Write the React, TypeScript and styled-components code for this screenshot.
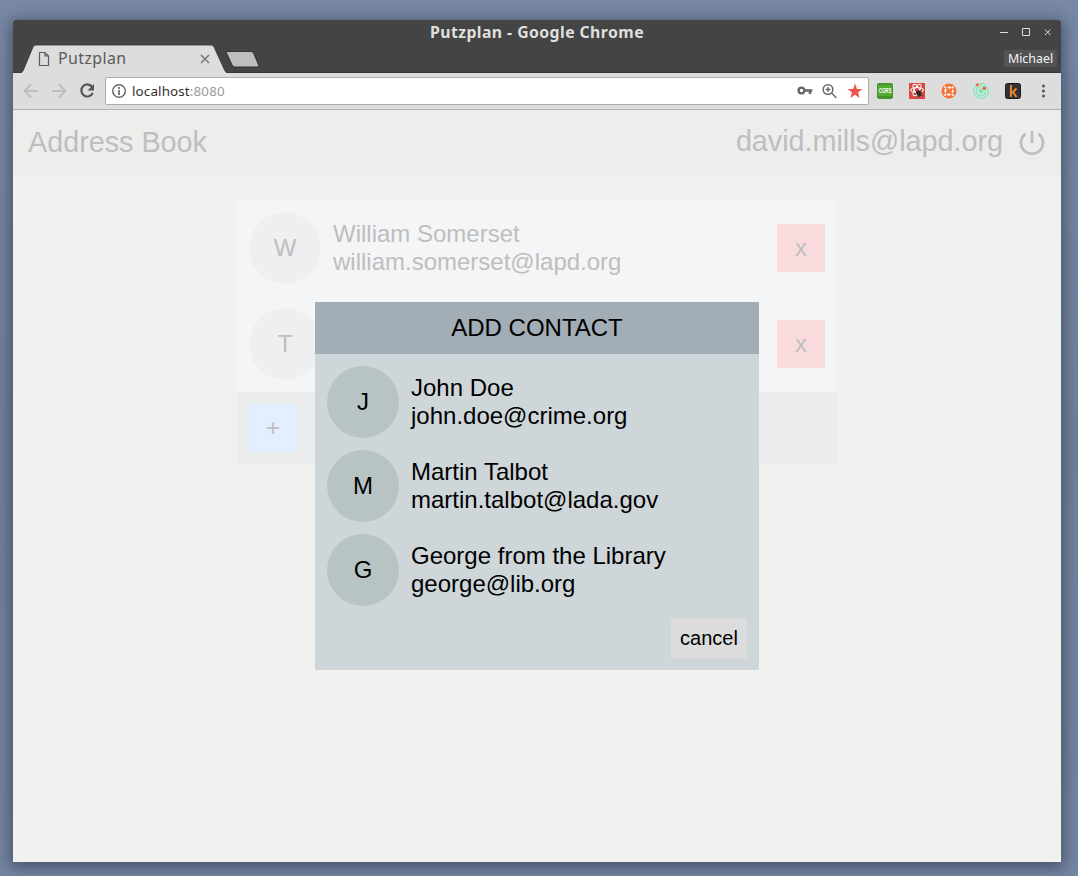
import React from "react";
import styled, { createGlobalStyle } from "styled-components";

const GlobalStyle = createGlobalStyle`
  * { box-sizing: border-box; }
  body { margin: 0; background: #76869f; }
`;

const uiFont = `"Noto Sans", "Open Sans", sans-serif`;

const Desktop = styled.div`
  width: 1078px;
  height: 876px;
  padding: 20px 17px 14px 13px;
  overflow: hidden;
  background: linear-gradient(#7888a5, #71819a 50%, #7585a2);
`;

const BrowserWindow = styled.div`
  height: 842px;
  display: flex;
  flex-direction: column;
  border-radius: 2px 2px 0 0;
  box-shadow: 0 3px 16px 2px rgba(35, 48, 64, 0.62);
  background: #f1f1ef;
`;

const TitleBar = styled.div`
  height: 24px;
  flex: none;
  display: grid;
  grid-template-columns: 1fr auto 1fr;
  align-items: center;
  background: #444;
  border-radius: 2px 2px 0 0;
`;

const WindowTitle = styled.div`
  grid-column: 2;
  font: bold 15.8px/24px ${uiFont};
  letter-spacing: 0.43px;
  color: #dfdfdd;
  white-space: nowrap;
`;

const WindowControls = styled.svg`
  justify-self: end;
  display: block;
  width: 64px;
  height: 24px;
`;

const TabStrip = styled.div`
  height: 29px;
  flex: none;
  display: flex;
  justify-content: space-between;
  background: #444;
  border-bottom: 1px solid #373737;
`;

const TabArea = styled.div`
  display: flex;
`;

const Tab = styled.div`
  position: relative;
  width: 206px;
  height: 29px;
  margin-left: 8px;
  padding: 0 17px;
  display: flex;
  align-items: center;
`;

const TabShape = styled.svg`
  position: absolute;
  left: 0;
  top: 0;
`;

const TabTitle = styled.span`
  position: relative;
  flex: 1;
  margin-left: 8px;
  font: 15.9px/27px ${uiFont};
  letter-spacing: 0.42px;
  color: #5a5a5a;
`;

const TabIcon = styled.svg`
  position: relative;
  flex: none;
`;

const NewTab = styled.svg`
  margin: 6px 0 0 -2px;
`;

const Profile = styled.div`
  width: 53px;
  height: 17px;
  margin: 6px 4px 0 0;
  background: #535353;
  border-radius: 1px;
  color: #f5f5f5;
  font: 12.4px/18px ${uiFont};
  text-align: center;
`;

const Toolbar = styled.div`
  height: 37px;
  flex: none;
  display: flex;
  align-items: center;
  background: #dddddd;
  border-bottom: 1px solid #b1b1b1;
`;

const NavIcons = styled.svg`
  flex: none;
  width: 92px;
  height: 36px;
`;

const AddressBar = styled.div`
  width: 764px;
  height: 28px;
  display: flex;
  align-items: center;
  padding-left: 5px;
  background: #fff;
  border: 1px solid #adadad;
  border-radius: 2px;
`;

const Url = styled.span`
  flex: 1;
  margin-left: 5px;
  font: 13.4px/26px ${uiFont};
  letter-spacing: 0.14px;
  color: #303030;
`;

const Port = styled.span`
  color: #999;
`;

const Extensions = styled.div`
  flex: 1;
  display: flex;
  align-items: center;
  padding-left: 8px;
`;

const ExtensionIcon = styled.svg`
  width: 16px;
  height: 16px;
  margin-right: 16px;
  flex: none;
  overflow: visible;
`;

const MenuIcon = styled.svg`
  margin-left: 4px;
`;

const Page = styled.main`
  flex: 1;
  background: #f1f1ef;
  font: 24px/28px "Liberation Sans", Arial, sans-serif;
  color: #bebebe;
`;

const PageHeader = styled.header`
  height: 66px;
  display: flex;
  justify-content: space-between;
  padding: 0 15px;
  background: #ededeb;
  font-size: 28.8px;
  line-height: 65px;
  letter-spacing: -0.03px;
`;

const Account = styled.div`
  display: flex;
  line-height: 62px;
`;

const PowerIcon = styled.svg`
  margin: 19px 0 0 15px;
`;

const ContactList = styled.section`
  width: 600px;
  margin: 24px 0 0 224px;
  background: #f3f5f7;
`;

const Contact = styled.div<{ $compact?: boolean }>`
  display: flex;
  align-items: center;
  padding: ${(p) => (p.$compact ? "0" : "12px")};
  height: ${(p) => (p.$compact ? "72px" : "96px")};
`;

const Avatar = styled.div<{ $strong?: boolean }>`
  width: 72px;
  height: 72px;
  flex: none;
  margin-right: 12px;
  border-radius: 50%;
  background: ${(p) => (p.$strong ? "#b8c4c4" : "#eeeff1")};
  text-align: center;
  line-height: 71px;
`;

const Details = styled.div`
  flex: 1;
  white-space: nowrap;
`;

const SquareButton = styled.button<{ $tone: string }>`
  width: 48px;
  height: 48px;
  padding: 0 0 1px;
  border: 0;
  background: ${(p) => p.$tone};
  color: inherit;
  font: inherit;
`;

const ListFooter = styled.div`
  height: 72px;
  padding: 12px;
  background: #ebecee;
`;

const Dialog = styled.section`
  position: fixed;
  left: 315px;
  top: 302px;
  width: 444px;
  height: 368px;
  background: #ced6d9;
  color: #000;
`;

const DialogTitle = styled.h2`
  height: 52px;
  margin: 0;
  background: #a3adb6;
  font-size: 24px;
  font-weight: normal;
  line-height: 51px;
  text-align: center;
`;

const DialogBody = styled.div`
  display: flex;
  flex-direction: column;
  gap: 12px;
  padding: 12px;
`;

const CancelButton = styled.button`
  align-self: flex-end;
  width: 76px;
  height: 40px;
  padding: 0;
  border: 0;
  background: #dcdcdc;
  color: #000;
  font: 20px "Liberation Sans", Arial, sans-serif;
`;

type Person = { name: string; email: string };

const firstContact: Person = {
  name: "William Somerset",
  email: "william.somerset@lapd.org",
};

const candidates: Person[] = [
  { name: "John Doe", email: "john.doe@crime.org" },
  { name: "Martin Talbot", email: "martin.talbot@lada.gov" },
  { name: "George from the Library", email: "george@lib.org" },
];

function BrowserChrome() {
  return (
    <>
      <TitleBar>
        <WindowTitle>Putzplan - Google Chrome</WindowTitle>
        <WindowControls viewBox="0 0 64 24" fill="none" stroke="#dedede">
          <path d="M3 12.5h8M25.5 8.500h7v7h-7zM48 9.500l5.500 5.500M53.500 9.500L48 15" />
        </WindowControls>
      </TitleBar>
      <TabStrip>
        <TabArea>
          <Tab>
            <TabShape width="206" height="29" viewBox="0 0 206 29">
              <path d="M0 29L2 27L12 3Q13 1 15 1H190Q192 1 193 3L204 27L206 29Z" fill="#ddd" stroke="#333" strokeWidth=".8" />
              <path d="M1 28.500H205" stroke="#ddd" />
            </TabShape>
            <TabIcon width="12" height="16" viewBox="0 0 12 16" fill="none" stroke="#5a5a5a" strokeWidth="1.2">
              <path d="M1.500 1.500H7L10.500 5V14.500H1.500ZM7 1.500V5H10.500" />
            </TabIcon>
            <TabTitle>Putzplan</TabTitle>
            <TabIcon width="10" height="10" viewBox="0 0 10 10" fill="none" stroke="#777" strokeWidth="1.5">
              <path d="M1 1L9 9M9 1L1 9" />
            </TabIcon>
          </Tab>
          <NewTab width="36" height="19" viewBox="0 0 36 19">
            <path d="M2 1.500H26Q28 1.500 29 4L33.500 15Q34 17 32 17H10Q8 17 7 15L1.500 3Z" fill="#bebebe" stroke="#343434" />
          </NewTab>
        </TabArea>
        <Profile>Michael</Profile>
      </TabStrip>
      <Toolbar>
        <NavIcons viewBox="0 0 92 36" fill="none" stroke="#bebebe" strokeWidth="2">
          <path d="M25 18H12M18 11.500L11.500 18L18 24.500M39 18H52M46 11.500L52.500 18L46 24.500" />
          <path d="M79.500 14.400A6 6 0 1 0 79.800 20" stroke="#555" strokeWidth="2.200" />
          <path d="M81 11V17.500H74.500Z" fill="#555" stroke="none" />
        </NavIcons>
        <AddressBar>
          <svg width="16" height="16" viewBox="0 0 16 16" fill="none" stroke="#666" strokeWidth="1.4">
            <circle cx="8" cy="8" r="6.300" />
            <path d="M8 7V12M8 4V6" strokeWidth="1.700" />
          </svg>
          <Url>localhost<Port>:8080</Port></Url>
          <svg width="76" height="20" viewBox="0 0 76 20" fill="none" stroke="#666">
            <circle cx="9.500" cy="9.500" r="2.900" strokeWidth="2.400" />
            <path d="M13 9.500H20.300M18 9.500V13" strokeWidth="2.500" />
            <circle cx="36" cy="8.500" r="4.800" strokeWidth="1.500" />
            <path d="M39.500 12L44.500 17M33.500 8.500H38.500M36 6V11" strokeWidth="1.400" />
            <path d="M63 2.500L64.900 7.900L70.500 8L66 11.500L67.700 17L63 13.700L58.300 17L60 11.500L55.500 8L61.100 7.900Z" fill="#ef5350" stroke="none" />
          </svg>
        </AddressBar>
        <Extensions>
          <ExtensionIcon viewBox="0 0 16 16">
            <rect width="16" height="16" rx="2" fill="#43942b" />
            <rect x="1" y="2" width="14" height="11" rx="1" fill="#55aa35" />
            <text transform="translate(1.8 10.3) scale(.56 1)" fill="#fff" fontFamily="Liberation Sans, sans-serif" fontWeight="bold" fontSize="7.800">CORS</text>
          </ExtensionIcon>
          <ExtensionIcon viewBox="0 0 16 16">
            <rect width="16" height="16" fill="#d64a43" />
            <g fill="none" stroke="#fff" strokeWidth="1">
              <ellipse cx="8" cy="7" rx="6.500" ry="2.500" />
              <ellipse cx="8" cy="7" rx="6.500" ry="2.500" transform="rotate(60 8 7)" />
              <ellipse cx="8" cy="7" rx="6.500" ry="2.500" transform="rotate(120 8 7)" />
            </g>
            <path d="M7 9L10 7L12 9L13 12L10 14L8 12Z" fill="#3d2323" />
            <path d="M7 8L14 13M12 7L9 14M6 11L13 9" stroke="#3d2323" strokeWidth=".8" />
          </ExtensionIcon>
          <ExtensionIcon viewBox="0 0 16 16">
            <circle cx="8" cy="8" r="7.500" fill="#f27438" />
            <circle cx="8" cy="8" r="3.700" fill="none" stroke="#fff" strokeWidth="1.800" strokeDasharray="3.600 2.212" strokeDashoffset="1.800" />
            <path d="M5.200 5.200L3.300 3.300M10.800 5.200L12.700 3.300M5.200 10.800L3.300 12.700M10.800 10.800L12.700 12.700" stroke="#fff" strokeWidth="1.300" />
          </ExtensionIcon>
          <ExtensionIcon viewBox="0 0 16 16">
            <g fill="none" stroke="#72efb7" strokeWidth="1.200">
              <circle cx="8" cy="8" r="7.300" />
              <circle cx="8" cy="8" r="4.700" />
            </g>
            <circle cx="8" cy="8" r="2.400" fill="#72efb7" />
            <circle cx="4.300" cy="1.800" r="1.600" fill="#f66b3f" />
            <circle cx="11.300" cy="5.200" r="1.600" fill="#f45435" />
          </ExtensionIcon>
          <ExtensionIcon viewBox="0 0 16 16">
            <rect x=".5" y=".5" width="15" height="15" rx="2" fill="#333" stroke="#171c22" />
            <path d="M6 2V14M11.500 5.500L7 10M8 9L11.500 14" fill="none" stroke="#f18a2b" strokeWidth="1.900" />
          </ExtensionIcon>
          <MenuIcon width="6" height="16" viewBox="0 0 6 16" fill="#5a5a5a">
            <circle cx="2.500" cy="3" r="1.600" />
            <circle cx="2.500" cy="8" r="1.600" />
            <circle cx="2.500" cy="13" r="1.600" />
          </MenuIcon>
        </Extensions>
      </Toolbar>
    </>
  );
}

function PersonDetails({ person, strong }: { person: Person; strong?: boolean }) {
  return (
    <>
      <Avatar $strong={strong}>{person.name[0]}</Avatar>
      <Details>
        <div>{person.name}</div>
        <div>{person.email}</div>
      </Details>
    </>
  );
}

export default function App() {
  return (
    <Desktop>
      <GlobalStyle />
      <BrowserWindow>
        <BrowserChrome />
        <Page>
          <PageHeader>
            <span>Address Book</span>
            <Account>
              david.mills@lapd.org
              <PowerIcon width="28" height="28" viewBox="0 0 28 28" fill="none" stroke="#bebebe" strokeWidth="2.700">
                <path d="M14 2V14M7.500 4.900A11 11 0 1 0 20.500 4.900" />
              </PowerIcon>
            </Account>
          </PageHeader>
          <ContactList>
            <Contact>
              <PersonDetails person={firstContact} />
              <SquareButton $tone="#fadcde">x</SquareButton>
            </Contact>
            <Contact>
              <Avatar>T</Avatar>
              <Details />
              <SquareButton $tone="#fadcde">x</SquareButton>
            </Contact>
            <ListFooter>
              <SquareButton $tone="#e3efff">+</SquareButton>
            </ListFooter>
          </ContactList>
          <Dialog role="dialog">
            <DialogTitle>ADD CONTACT</DialogTitle>
            <DialogBody>
              {candidates.map((person) => (
                <Contact $compact key={person.email}>
                  <PersonDetails person={person} strong />
                </Contact>
              ))}
              <CancelButton>cancel</CancelButton>
            </DialogBody>
          </Dialog>
        </Page>
      </BrowserWindow>
    </Desktop>
  );
}
